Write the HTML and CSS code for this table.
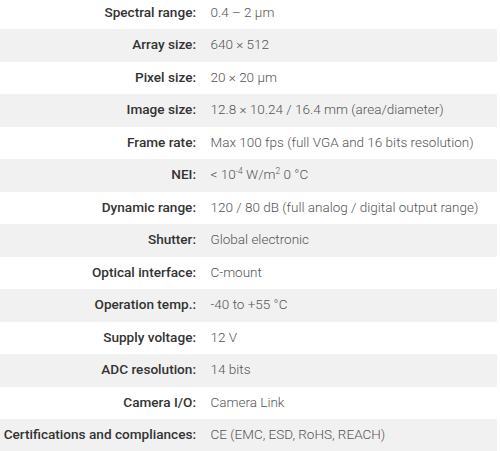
FILE: index.html
```html
<!DOCTYPE html>
<html>
<head>
<meta charset="utf-8">
<link rel="stylesheet" href="styles.css">
</head>
<body>
<div class="specs">
  <div class="row"><div class="label">Spectral range:</div><div class="value">0.4 – 2 µm</div></div>
  <div class="row alt"><div class="label">Array size:</div><div class="value">640 × 512</div></div>
  <div class="row"><div class="label">Pixel size:</div><div class="value">20 × 20 µm</div></div>
  <div class="row alt"><div class="label">Image size:</div><div class="value">12.8 × 10.24 / 16.4 mm (area/diameter)</div></div>
  <div class="row"><div class="label">Frame rate:</div><div class="value">Max 100 fps (full VGA and 16 bits resolution)</div></div>
  <div class="row alt"><div class="label">NEI:</div><div class="value">&lt; 10<sup>-4</sup> W/m<sup>2</sup> 0 °C</div></div>
  <div class="row"><div class="label">Dynamic range:</div><div class="value">120 / 80 dB (full analog / digital output range)</div></div>
  <div class="row alt"><div class="label">Shutter:</div><div class="value">Global electronic</div></div>
  <div class="row"><div class="label">Optical interface:</div><div class="value">C-mount</div></div>
  <div class="row alt"><div class="label">Operation temp.:</div><div class="value">-40 to +55 °C</div></div>
  <div class="row"><div class="label">Supply voltage:</div><div class="value">12 V</div></div>
  <div class="row alt"><div class="label">ADC resolution:</div><div class="value">14 bits</div></div>
  <div class="row"><div class="label">Camera I/O:</div><div class="value">Camera Link</div></div>
  <div class="row alt"><div class="label">Certifications and compliances:</div><div class="value">CE (EMC, ESD, RoHS, REACH)</div></div>
</div>
</body>
</html>
```
FILE: styles.css
```css
html, body {
  margin: 0;
  padding: 0;
  background: #ffffff;
}
body {
  font-family: Roboto, "Liberation Sans", sans-serif;
  overflow: hidden;
}
.specs {
  width: 497px;
  margin-top: -3.5px;
}
.row {
  display: grid;
  grid-template-columns: 196px 1fr;
  column-gap: 14.5px;
  align-items: center;
  box-sizing: border-box;
  height: 32.5px;
  padding-bottom: 2px;
}
.row.alt {
  background: #f1f1f1;
}
.label {
  justify-self: end;
  font-size: 13.6px;
  font-weight: 500;
  color: #333333;
  white-space: nowrap;
}
.value {
  font-size: 13.5px;
  font-weight: 300;
  color: #555555;
  white-space: nowrap;
}
.value sup {
  font-size: 8.5px;
  line-height: 0;
  vertical-align: 5px;
}
```
